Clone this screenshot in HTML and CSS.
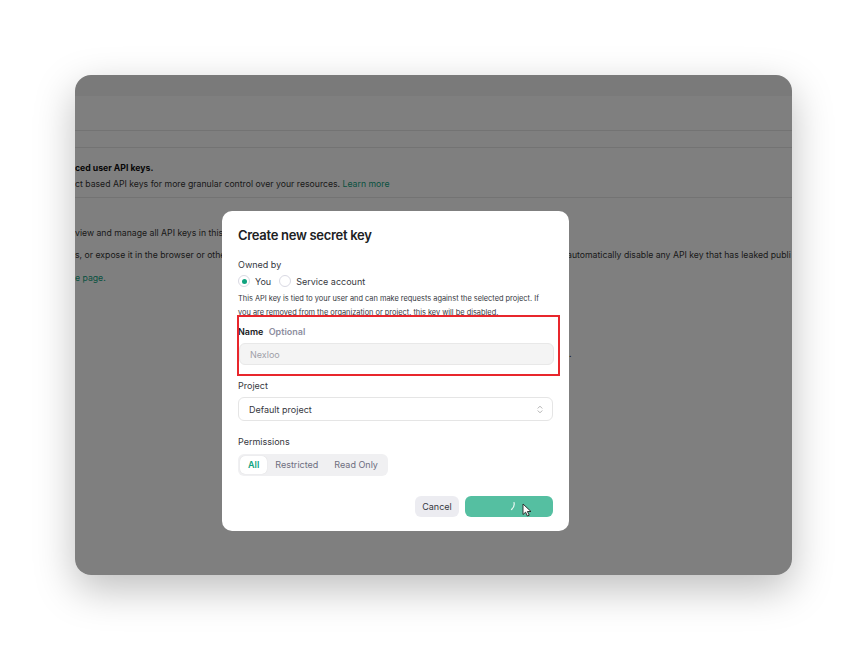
FILE: index.html
```html
<!DOCTYPE html>
<html lang="en">
<head>
    <meta charset="UTF-8">
    <title>Create new secret key</title>
    <link rel="stylesheet" href="styles.css">
</head>
<body>
    <div class="window">
        <div class="page">
            <div class="page-top"></div>
            <div class="page-row tall"></div>
            <div class="page-row short"></div>
            <div class="page-notice">
                <div class="notice-title">ced user API keys.</div>
                <div class="notice-text">ct based API keys for more granular control over your resources. <span class="link">Learn more</span></div>
            </div>
            <div class="page-body">
                <p>view and manage all API keys in this</p>
                <p><span class="cut">s, or expose it in the browser or othe</span>automatically disable any API key that has leaked publi</p>
                <p class="link">e page.</p>
                <p class="tail"><span class="cut"></span>l.</p>
            </div>
        </div>

        <div class="overlay">
            <div class="modal">
                <h1 class="modal-title">Create new secret key</h1>

                <div class="label">Owned by</div>
                <div class="radios">
                    <label class="radio"><span class="dot on"></span>You</label>
                    <label class="radio"><span class="dot"></span>Service account</label>
                </div>
                <p class="hint">This API key is tied to your user and can make requests against the selected project. If you are removed from the organization or project, this key will be disabled.</p>

                <div class="field highlight">
                    <div class="label">Name <span class="muted">Optional</span></div>
                    <div class="input">Nexloo</div>
                </div>

                <div class="field project">
                    <div class="label">Project</div>
                    <div class="select">
                        <span>Default project</span>
                        <svg width="6" height="9" viewBox="0 0 6 9" fill="none" stroke="#aaa" stroke-width="0.9" stroke-linecap="round" stroke-linejoin="round">
                            <path d="M1 3.2L3 1.2L5 3.2"/>
                            <path d="M1 5.8L3 7.8L5 5.8"/>
                        </svg>
                    </div>
                </div>

                <div class="field perms">
                    <div class="label">Permissions</div>
                    <div class="segments">
                        <span class="seg active">All</span>
                        <span class="seg">Restricted</span>
                        <span class="seg">Read Only</span>
                    </div>
                </div>

                <div class="actions">
                    <button class="btn cancel">Cancel</button>
                    <button class="btn create">
                        <svg class="spinner" width="8" height="10" viewBox="0 0 8 10" fill="none" stroke="#e8f7f2" stroke-width="1.2" stroke-linecap="round">
                            <path d="M5 1.5C5.6 4 5 6.5 2.5 8.5"/>
                        </svg>
                        <svg class="cursor" width="11" height="14" viewBox="0 0 11 14">
                            <path d="M1 1L1 11.5L3.6 9.2L5.4 13L7.2 12.2L5.4 8.5L9 8.5Z" fill="#fff" stroke="#222" stroke-width="0.9" stroke-linejoin="round"/>
                        </svg>
                    </button>
                </div>
            </div>
        </div>
    </div>
</body>
</html>
```

FILE: styles.css
```css
* {
    margin: 0;
    padding: 0;
    box-sizing: border-box;
}

body {
    background: #fff;
    padding: 75px;
    font-family: Inter, "Noto Sans", sans-serif;
    color: #0d0d0d;
}

.window {
    position: relative;
    width: 717px;
    height: 500px;
    border-radius: 16px;
    overflow: hidden;
    box-shadow: 0 14px 40px rgba(0, 0, 0, 0.26);
}

/* page behind the dialog */
.page {
    height: 100%;
    background: #fff;
    font-size: 8.7px;
    white-space: nowrap;
}

.page-top {
    height: 21px;
    background: #f4f4f4;
}

.page-row {
    border-bottom: 1px solid #e6e6e6;
}

.page-row.tall {
    height: 35px;
}

.page-row.short {
    height: 17px;
}

.page-notice {
    padding-top: 12px;
    height: 50px;
    border-bottom: 1px solid #e6e6e6;
    line-height: 16px;
}

.notice-title {
    font-weight: 700;
    color: #0d0d0d;
}

.notice-text {
    color: #353535;
}

.link {
    color: #10a37f;
}

.page-body {
    padding-top: 28px;
    color: #353535;
}

.page-body p {
    height: 22px;
    line-height: 14px;
}

.page-body .link {
    height: 25px;
    padding-top: 1px;
}

.page-body .tail {
    padding-top: 52px;
    height: auto;
}

.cut {
    display: inline-block;
    width: 492px;
    overflow: hidden;
    vertical-align: top;
}

/* dim layer + dialog */
.overlay {
    position: absolute;
    inset: 0;
    background: rgba(0, 0, 0, 0.5);
    padding: 136px 0 0 147px;
}

.modal {
    position: relative;
    width: 347px;
    height: 320px;
    background: #fff;
    border-radius: 10px;
    padding: 16px 16px 0;
    color: #202123;
}

.modal-title {
    font-size: 13px;
    font-weight: 600;
    letter-spacing: -0.3px;
    line-height: 16px;
    margin-bottom: 16px;
}

.label {
    font-size: 9px;
    color: #353740;
    line-height: 12px;
}

.muted {
    color: #8e8ea0;
    margin-left: 3px;
}

.radios {
    display: flex;
    gap: 8px;
    margin-top: 2px;
    font-size: 9px;
    color: #353740;
}

.radio {
    display: flex;
    align-items: center;
    gap: 5px;
    height: 16px;
}

.dot {
    width: 12px;
    height: 12px;
    border: 1px solid #d9d9e3;
    border-radius: 50%;
    display: flex;
    align-items: center;
    justify-content: center;
}

.dot.on::after {
    content: '';
    width: 5px;
    height: 5px;
    border-radius: 50%;
    background: #10a37f;
}

.hint {
    font-size: 7.4px;
    line-height: 14px;
    color: #353740;
    margin-top: 3px;
    width: 315px;
}

.field {
    margin-top: 12px;
}

.field .label {
    margin-bottom: 6px;
}

.field.highlight {
    margin-top: 6px;
}

.field.highlight .label {
    font-weight: 600;
    color: #202123;
    margin-bottom: 5px;
}

.field.highlight::after {
    content: '';
    position: absolute;
    left: 15px;
    top: 104px;
    width: 319px;
    height: 57px;
    border: 2px solid #e8262c;
    pointer-events: none;
}

.input,
.select {
    width: 315px;
    border-radius: 6px;
    font-size: 9px;
    display: flex;
    align-items: center;
    padding: 0 9px 0 10px;
}

.input {
    height: 22px;
    background: #f4f4f4;
    border: 1px solid #e8e8e8;
    color: #a0a0a8;
    margin-left: 1px;
}

.select {
    height: 24px;
    border: 1px solid #e5e5e5;
    justify-content: space-between;
    color: #353740;
}

.field.project {
    margin-top: 15px;
}

.field.project .label {
    margin-bottom: 5px;
}

.field.perms {
    margin-top: 15px;
}

.field.perms .label {
    margin-bottom: 4px;
}

.segments {
    display: inline-flex;
    background: #f0f0f2;
    border-radius: 6px;
    padding: 2px;
    font-size: 9px;
    color: #6e6e80;
}

.seg {
    padding: 0 8px;
    height: 18px;
    line-height: 18px;
}

.seg.active {
    background: #fff;
    border-radius: 5px;
    color: #10a37f;
    font-weight: 600;
    box-shadow: 0 0 1px rgba(0, 0, 0, 0.15);
}

.actions {
    display: flex;
    justify-content: flex-end;
    gap: 6px;
    margin-top: 20px;
}

.btn {
    height: 21px;
    border: none;
    border-radius: 6px;
    font-family: inherit;
    font-size: 9px;
}

.cancel {
    width: 44px;
    background: #ececf1;
    color: #353740;
}

.create {
    position: relative;
    width: 88px;
    background: #55bfa1;
}

.spinner {
    position: absolute;
    left: 44px;
    top: 5px;
}

.cursor {
    position: absolute;
    left: 57px;
    top: 7px;
}
```
